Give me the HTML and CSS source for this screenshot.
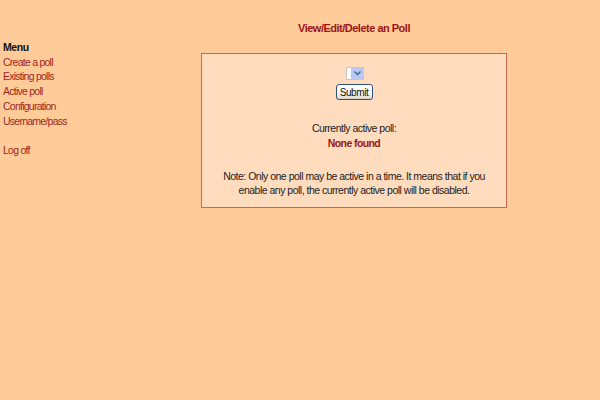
FILE: index.html
```html
<!DOCTYPE html>
<html>
<head>
<meta charset="utf-8">
<link rel="stylesheet" href="styles.css">
</head>
<body>
<div class="page">
  <div class="side">
    <div class="menu-title">Menu</div>
    <a class="link" href="#">Create a poll</a>
    <a class="link" href="#">Existing polls</a>
    <a class="link" href="#">Active poll</a>
    <a class="link" href="#">Configuration</a>
    <a class="link" href="#">Username/pass</a>
    <div class="spacer"></div>
    <a class="link" href="#">Log off</a>
  </div>
  <div class="main">
    <div class="heading">View/Edit/Delete an Poll</div>
    <div class="box">
      <div class="select">
        <span class="select-field"></span>
        <span class="select-btn">
          <svg width="7" height="5" viewBox="0 0 7 5"><path d="M0.5 0.5 L3.5 3.5 L6.5 0.5" fill="none" stroke="#4d6185" stroke-width="1.4"/></svg>
        </span>
      </div>
      <div class="btn-row"><span class="button">Submit</span></div>
      <div class="active-label">Currently active poll:</div>
      <div class="none">None found</div>
      <div class="note">Note: Only one poll may be active in a time. It means that if you<br>enable any poll, the currently active poll will be disabled.</div>
    </div>
  </div>
</div>
</body>
</html>
```
FILE: styles.css
```css
html, body {
  margin: 0;
  padding: 0;
  background: #ffcc99;
}
body {
  font-family: "Liberation Sans", Arial, sans-serif;
  font-size: 10.5px;
  letter-spacing: -0.5px;
  color: #222222;
}
.page {
  display: flex;
  align-items: flex-start;
}
.side {
  width: 198px;
  padding-left: 3px;
  padding-top: 40px;
  display: flex;
  flex-direction: column;
  font-size: 10.5px;
  letter-spacing: -0.75px;
  line-height: 14.7px;
}
.menu-title {
  font-weight: bold;
  letter-spacing: -0.4px;
  color: #111111;
}
.link {
  color: #a0261e;
  text-decoration: none;
}
.spacer {
  height: 14.7px;
}
.main {
  width: 306px;
  display: flex;
  flex-direction: column;
}
.heading {
  margin-top: 21px;
  line-height: 14px;
  text-align: center;
  font-size: 11px;
  font-weight: bold;
  letter-spacing: -0.5px;
  color: #9c1414;
}
.box {
  margin-top: 18px;
  border: 1px solid #cc6655;
  background: #ffdcbd;
  padding: 13px 0 10px;
  display: flex;
  flex-direction: column;
  align-items: center;
  text-align: center;
}
.select {
  display: flex;
  width: 18px;
  height: 13px;
  box-sizing: border-box;
  border: 1px solid #c8c8c8;
  background: #ffffff;
  margin-left: 2px;
}
.select-field {
  width: 4px;
}
.select-btn {
  flex: 1;
  background: #b9c9f5;
  display: flex;
  align-items: center;
  justify-content: center;
}
.btn-row {
  margin-top: 4px;
  display: flex;
}
.button {
  display: inline-flex;
  align-items: center;
  justify-content: center;
  width: 37px;
  height: 16px;
  box-sizing: border-box;
  border: 1px solid #2f4f7f;
  border-radius: 3px;
  background: linear-gradient(#ffffff, #f4f3ee 70%, #d8d5c8);
  font-size: 10px;
  letter-spacing: -0.4px;
  color: #111111;
}
.active-label {
  margin-top: 21px;
  line-height: 15px;
}
.none {
  line-height: 15px;
  font-weight: bold;
  letter-spacing: -0.6px;
  color: #9c1414;
}
.note {
  margin-top: 18px;
  line-height: 14px;
}
```
